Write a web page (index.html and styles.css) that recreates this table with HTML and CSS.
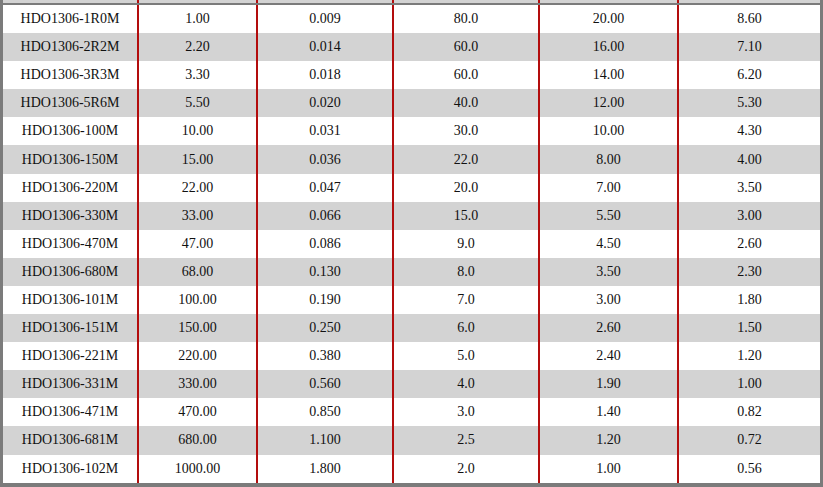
FILE: index.html
```html
<!DOCTYPE html>
<html>
<head>
<meta charset="utf-8">
<link rel="stylesheet" href="styles.css">
</head>
<body>
<div class="frame">
  <div class="row top"><div class="cell"></div><div class="cell"></div><div class="cell"></div><div class="cell"></div><div class="cell"></div><div class="cell"></div></div>
  <div class="row"><div class="cell">HDO1306-1R0M</div><div class="cell">1.00</div><div class="cell">0.009</div><div class="cell">80.0</div><div class="cell">20.00</div><div class="cell">8.60</div></div>
  <div class="row alt"><div class="cell">HDO1306-2R2M</div><div class="cell">2.20</div><div class="cell">0.014</div><div class="cell">60.0</div><div class="cell">16.00</div><div class="cell">7.10</div></div>
  <div class="row"><div class="cell">HDO1306-3R3M</div><div class="cell">3.30</div><div class="cell">0.018</div><div class="cell">60.0</div><div class="cell">14.00</div><div class="cell">6.20</div></div>
  <div class="row alt"><div class="cell">HDO1306-5R6M</div><div class="cell">5.50</div><div class="cell">0.020</div><div class="cell">40.0</div><div class="cell">12.00</div><div class="cell">5.30</div></div>
  <div class="row"><div class="cell">HDO1306-100M</div><div class="cell">10.00</div><div class="cell">0.031</div><div class="cell">30.0</div><div class="cell">10.00</div><div class="cell">4.30</div></div>
  <div class="row alt"><div class="cell">HDO1306-150M</div><div class="cell">15.00</div><div class="cell">0.036</div><div class="cell">22.0</div><div class="cell">8.00</div><div class="cell">4.00</div></div>
  <div class="row"><div class="cell">HDO1306-220M</div><div class="cell">22.00</div><div class="cell">0.047</div><div class="cell">20.0</div><div class="cell">7.00</div><div class="cell">3.50</div></div>
  <div class="row alt"><div class="cell">HDO1306-330M</div><div class="cell">33.00</div><div class="cell">0.066</div><div class="cell">15.0</div><div class="cell">5.50</div><div class="cell">3.00</div></div>
  <div class="row"><div class="cell">HDO1306-470M</div><div class="cell">47.00</div><div class="cell">0.086</div><div class="cell">9.0</div><div class="cell">4.50</div><div class="cell">2.60</div></div>
  <div class="row alt"><div class="cell">HDO1306-680M</div><div class="cell">68.00</div><div class="cell">0.130</div><div class="cell">8.0</div><div class="cell">3.50</div><div class="cell">2.30</div></div>
  <div class="row"><div class="cell">HDO1306-101M</div><div class="cell">100.00</div><div class="cell">0.190</div><div class="cell">7.0</div><div class="cell">3.00</div><div class="cell">1.80</div></div>
  <div class="row alt"><div class="cell">HDO1306-151M</div><div class="cell">150.00</div><div class="cell">0.250</div><div class="cell">6.0</div><div class="cell">2.60</div><div class="cell">1.50</div></div>
  <div class="row"><div class="cell">HDO1306-221M</div><div class="cell">220.00</div><div class="cell">0.380</div><div class="cell">5.0</div><div class="cell">2.40</div><div class="cell">1.20</div></div>
  <div class="row alt"><div class="cell">HDO1306-331M</div><div class="cell">330.00</div><div class="cell">0.560</div><div class="cell">4.0</div><div class="cell">1.90</div><div class="cell">1.00</div></div>
  <div class="row"><div class="cell">HDO1306-471M</div><div class="cell">470.00</div><div class="cell">0.850</div><div class="cell">3.0</div><div class="cell">1.40</div><div class="cell">0.82</div></div>
  <div class="row alt"><div class="cell">HDO1306-681M</div><div class="cell">680.00</div><div class="cell">1.100</div><div class="cell">2.5</div><div class="cell">1.20</div><div class="cell">0.72</div></div>
  <div class="row"><div class="cell">HDO1306-102M</div><div class="cell">1000.00</div><div class="cell">1.800</div><div class="cell">2.0</div><div class="cell">1.00</div><div class="cell">0.56</div></div>
</div>
</body>
</html>
```

FILE: styles.css
```css
html, body {
  margin: 0;
  padding: 0;
  background: #7b7b7b;
}
.frame {
  width: 823px;
  height: 487px;
  box-sizing: border-box;
  border-left: 3px solid #7b7b7b;
  border-right: 3px solid #7b7b7b;
  background: #7b7b7b;
  font-family: "Liberation Serif", "Times New Roman", serif;
  font-size: 14px;
  color: #111;
}
.row {
  display: grid;
  grid-template-columns: 136px 119px 136px 146px 139px 141px;
  height: 28.1px;
  background: #ffffff;
}
.row.alt {
  background: #d3d3d3;
}
.row.top {
  height: 3px;
  background: #d3d3d3;
  border-bottom: 2px solid #7b7b7b;
}
.cell {
  border-right: 2px solid #b30d0d;
  display: flex;
  align-items: center;
  justify-content: center;
  white-space: nowrap;
}
.cell:last-child {
  border-right: none;
}
```
